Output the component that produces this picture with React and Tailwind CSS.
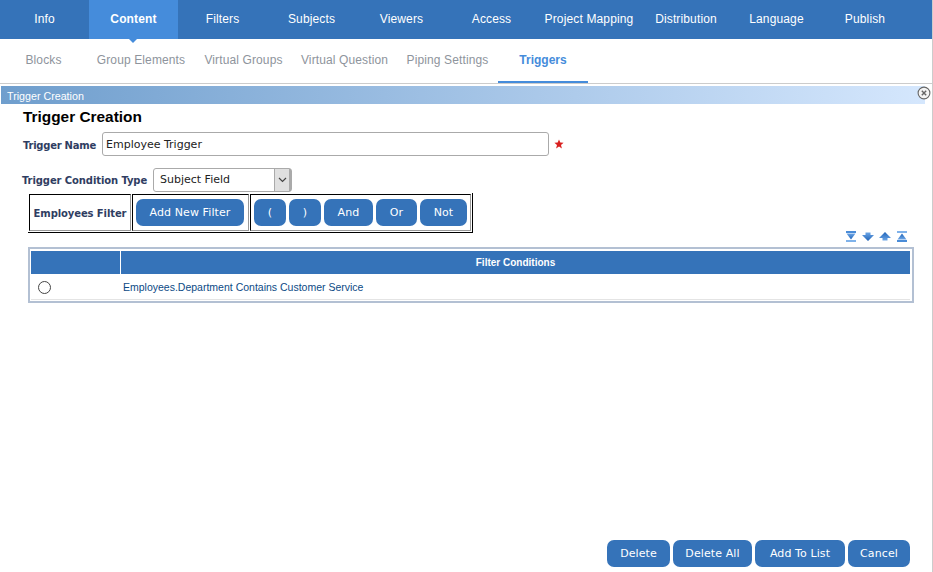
const tabs = [
  ["Info", "w-[89px]"],
  ["Content", "w-[89px]"],
  ["Filters", "w-[89px]"],
  ["Subjects", "w-[89px]"],
  ["Viewers", "w-[91px]"],
  ["Access", "w-[89px]"],
  ["Project Mapping", "w-[106px]"],
  ["Distribution", "w-[88px]"],
  ["Language", "w-[93px]"],
  ["Publish", "w-[84px]"],
];

const subTabs = [
  ["Blocks", "w-[87px]"],
  ["Group Elements", "w-[108px]"],
  ["Virtual Groups", "w-[97px]"],
  ["Virtual Question", "w-[105px]"],
  ["Piping Settings", "w-[101px]"],
];

function Btn({ className = "", children }) {
  return (
    <button className={"h-[27px] pt-[2px] bg-[#3573b9] rounded-[7px] text-white text-[11px] tracking-[0.1px] font-['DejaVu_Sans',sans-serif] " + className}>
      {children}
    </button>
  );
}

function SortIcon({ flip, bars }) {
  return (
    <svg width="12" height="11" viewBox="0 0 12 11" className={flip ? "rotate-180" : ""}>
      <defs>
        <linearGradient id="sortFill" x1="0" y1="0" x2="0" y2="1">
          <stop offset="0" stopColor="#1f63b8" />
          <stop offset="1" stopColor="#6da6e6" />
        </linearGradient>
      </defs>
      {bars && <rect x="1" y="0" width="10" height="2" fill="#7fb2ea" />}
      <path d={bars ? "M6 2.5 L10.5 8.5 H1.5 Z" : "M6 1 L12 7 H8.5 V9.5 H3.5 V7 H0 Z"} fill="url(#sortFill)" />
      {bars && <rect x="1" y="9" width="10" height="2" fill="#4a8cd8" />}
    </svg>
  );
}

export default function App() {
  return (
    <div className="h-[572px] w-[933px] flex flex-col bg-white border-r border-[#ccc] overflow-hidden font-['Liberation_Sans',Arial,sans-serif]">
      <div className="h-[39px] flex bg-[#3573b9] shrink-0">
        {tabs.map(([t, w]) => (
          <div
            key={t}
            className={
              w + " relative flex items-center justify-center pb-[2px] text-[12px] tracking-[0.14px] text-white " +
              (t === "Content" ? "bg-[#458cdb] font-bold" : "")
            }
          >
            {t}
            {t === "Content" && (
              <span className="absolute top-full left-[40px] border-x-[4px] border-t-[4px] border-x-transparent border-t-[#458cdb]" />
            )}
          </div>
        ))}
      </div>

      <div className="h-[45px] flex border-b border-[#ccc] shrink-0">
        {subTabs.map(([t, w]) => (
          <div key={t} className={w + " flex items-center justify-center pb-[2px] text-[12px] tracking-[0.12px] text-[#8e949c]"}>
            {t}
          </div>
        ))}
        <div className="w-[90px] flex items-center justify-center text-[12px] font-bold text-[#458cdb] border-b-2 border-[#458cdb]">
          Triggers
        </div>
      </div>

      <div className="relative mt-[2px] ml-px mr-[7px] h-[18px] bg-gradient-to-r from-[#6f9ecd] to-[#d5e7fd] text-white text-[10.7px] leading-[20px] pl-[6px] shrink-0">
        Trigger Creation
        <svg width="14" height="14" viewBox="0 0 14 14" className="absolute top-0 right-[-6px]">
          <circle cx="7" cy="7" r="5.9" fill="#f4f4f4" stroke="#666" strokeWidth="1.1" />
          <path d="M4.8 4.8 L9.2 9.2 M9.2 4.8 L4.8 9.2" stroke="#666" strokeWidth="1.4" />
        </svg>
      </div>

      <div className="pl-[23px] pt-[4px] text-[15.4px] leading-[18px] font-bold text-black">Trigger Creation</div>

      <div className="flex items-center ml-[23px] mt-[6px] h-[24px]">
        <label className="w-[79px] pt-[2px] whitespace-nowrap text-[10px] font-bold text-[#2f3d62] font-['DejaVu_Sans',sans-serif] tracking-[-0.25px]">Trigger Name</label>
        <div className="w-[447px] h-[24px] border border-[#aaa] rounded-[3px] pl-[3px] pt-[2px] flex items-center text-[11px] text-[#222] font-['DejaVu_Sans',sans-serif]">
          Employee Trigger
        </div>
        <svg width="10" height="10" viewBox="0 0 10 10" className="ml-[5px]">
          <path d="M5 0.5 L6.3 3.6 L9.6 3.8 L7 6 L7.9 9.4 L5 7.5 L2.1 9.4 L3 6 L0.4 3.8 L3.7 3.6 Z" fill="#d9201f" />
        </svg>
      </div>

      <div className="flex items-center ml-[22px] mt-[12px] h-[24px]">
        <label className="w-[131px] whitespace-nowrap text-[10px] font-bold text-[#2f3d62] font-['DejaVu_Sans',sans-serif] tracking-[-0.1px]">Trigger Condition Type</label>
        <div className="w-[139px] h-[24px] border border-[#aaa] rounded-[3px] flex items-center text-[11px] text-[#222] font-['DejaVu_Sans',sans-serif]">
          <span className="flex-1 pl-[6px]">Subject Field</span>
          <span className="w-[17px] h-[22px] bg-[#e0e0e0] border-x-2 border-l border-[#aaa] flex items-center justify-center">
            <svg width="9" height="6" viewBox="0 0 9 6">
              <path d="M1 1 L4.5 4.5 L8 1" fill="none" stroke="#444" strokeWidth="1.2" />
            </svg>
          </span>
        </div>
      </div>

      <div className="ml-[28px] mt-px flex gap-px w-fit h-[40px] p-px border-r border-b border-black bg-white shrink-0">
        <div className="w-[102px] pt-px border border-t-black border-l-black border-r-[#999] border-b-[#999] flex items-center justify-center text-[10px] font-bold text-[#2f3d62] font-['DejaVu_Sans',sans-serif] tracking-[-0.1px] whitespace-nowrap">
          Employees Filter
        </div>
        <div className="w-[117px] border border-t-black border-l-black border-r-[#999] border-b-[#999] flex items-center pl-[3px]">
          <Btn className="w-[108px]">Add New Filter</Btn>
        </div>
        <div className="w-[221px] border border-t-black border-l-black border-r-[#999] border-b-[#999] flex items-center gap-[3px] pl-[3px]">
          <Btn className="w-[32px]">(</Btn>
          <Btn className="w-[32px]">)</Btn>
          <Btn className="w-[49px]">And</Btn>
          <Btn className="w-[41px]">Or</Btn>
          <Btn className="w-[47px]">Not</Btn>
        </div>
      </div>

      <div className="flex justify-end gap-[5px] h-[14px] items-start pr-[24px] -mt-[2px] mb-[2px] shrink-0">
        <SortIcon flip bars />
        <SortIcon flip />
        <SortIcon />
        <SortIcon bars />
      </div>

      <div className="ml-[28px] w-[886px] h-[56px] border-2 border-[#b3c0d3] p-px pt-[2px] pr-[2px] shrink-0">
        <div className="flex h-[23px] bg-[#3573b9] text-white font-bold text-[10px]">
          <div className="w-[89px] border-r border-white box-content" />
          <div className="flex-1 flex items-center justify-center">Filter Conditions</div>
        </div>
        <div className="flex items-center h-[26px] pt-[2px] border-b border-[#e4e4e4] text-[10.5px]">
          <div className="w-[90px] pl-[7px] flex items-center">
            <span className="w-[13px] h-[13px] rounded-full border border-[#444] bg-white" />
          </div>
          <div className="pl-[2px] text-[#0c4a85]">Employees.Department Contains Customer Service</div>
        </div>
      </div>

      <div className="mt-auto mb-[5px] flex justify-end gap-[3px] pr-[22px]">
        <Btn className="w-[63px]">Delete</Btn>
        <Btn className="w-[79px]">Delete All</Btn>
        <Btn className="w-[90px]">Add To List</Btn>
        <Btn className="w-[62px]">Cancel</Btn>
      </div>
    </div>
  );
}
